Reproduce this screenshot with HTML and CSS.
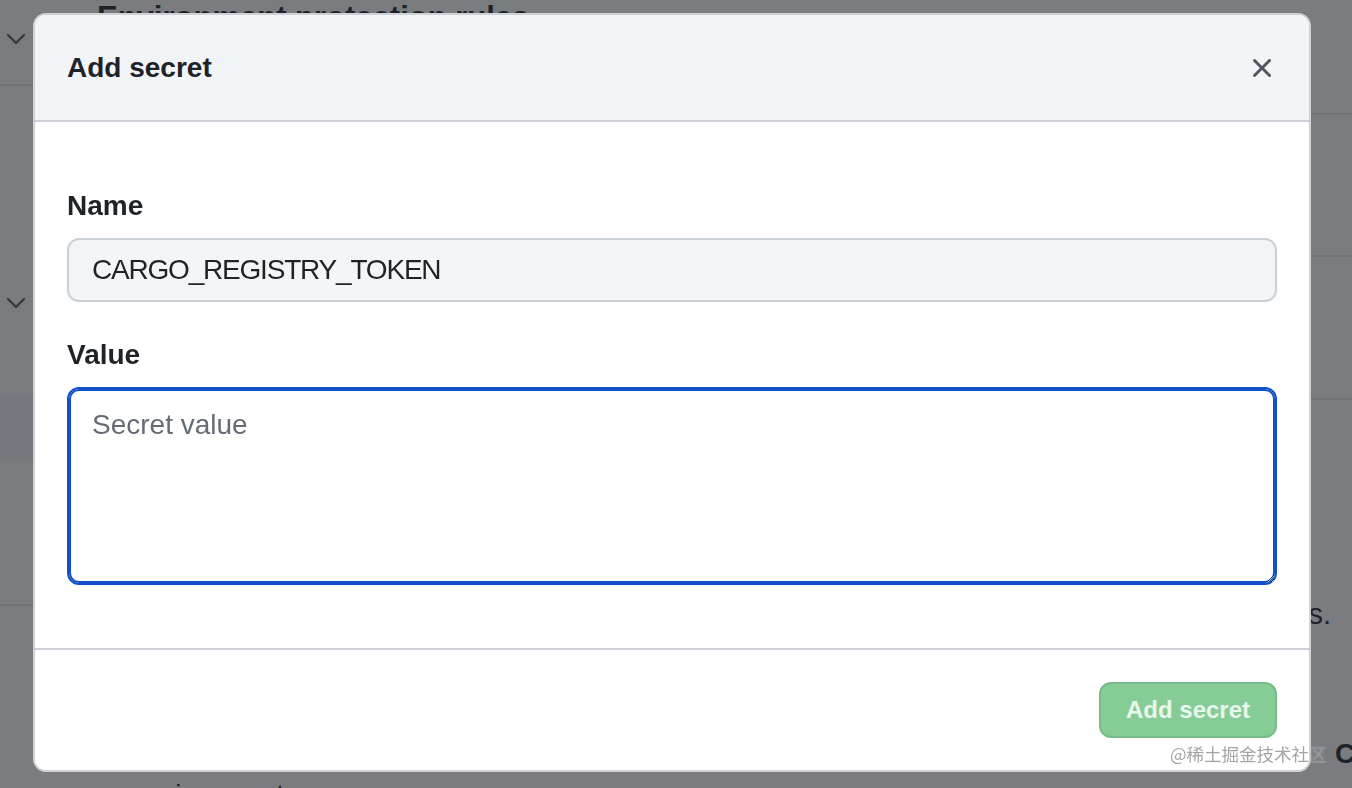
FILE: index.html
```html
<!DOCTYPE html>
<html lang="en">
<head>
<meta charset="utf-8">
<title>Add secret</title>
<link rel="stylesheet" href="styles.css">
</head>
<body>
<div class="page">
  <aside class="rail">
    <div class="rail-row rail-row--first">
      <svg class="chev" viewBox="0 0 20 12"><path d="M2 2 L10 10 L18 2" fill="none" stroke="#57606a" stroke-width="2.4" stroke-linecap="round" stroke-linejoin="round"/></svg>
    </div>
    <div class="rail-row rail-row--second">
      <svg class="chev" viewBox="0 0 20 12"><path d="M2 2 L10 10 L18 2" fill="none" stroke="#57606a" stroke-width="2.4" stroke-linecap="round" stroke-linejoin="round"/></svg>
    </div>
    <div class="rail-band"></div>
    <div class="rail-row rail-row--third"></div>
  </aside>
  <main class="content">
    <div class="section section--head"><h2 class="section-title">Environment protection rules</h2></div>
    <div class="section section--a"></div>
    <div class="section section--b"></div>
    <div class="section section--c"><p class="section-text">Secrets are encrypted environment variables and are only exposed to selected actions.</p></div>
    <div class="section section--d"><span class="section-strong">Co</span></div>
    <div class="section section--e"><p class="section-foot">environment</p></div>
  </main>
</div>

<div class="overlay"></div>

<div class="dialog" role="dialog" aria-labelledby="dialog-title">
  <header class="dialog-header">
    <h1 class="dialog-title" id="dialog-title">Add secret</h1>
    <button class="dialog-close" type="button" aria-label="Close">
      <svg viewBox="0 0 16 16" width="32" height="32"><path fill="#50565e" d="M3.72 3.72a.75.75 0 0 1 1.06 0L8 6.94l3.22-3.22a.749.749 0 0 1 1.275.326.749.749 0 0 1-.215.734L9.06 8l3.22 3.22a.749.749 0 0 1-.326 1.275.749.749 0 0 1-.734-.215L8 9.06l-3.22 3.22a.751.751 0 0 1-1.042-.018.751.751 0 0 1-.018-1.042L6.94 8 3.72 4.78a.75.75 0 0 1 0-1.06Z"/></svg>
    </button>
  </header>
  <div class="dialog-body">
    <label class="field-label" for="secret-name">Name</label>
    <input class="field-input" id="secret-name" type="text" value="CARGO_REGISTRY_TOKEN">
    <label class="field-label field-label--spaced" for="secret-value">Value</label>
    <textarea class="field-textarea" id="secret-value" placeholder="Secret value" autofocus></textarea>
  </div>
  <footer class="dialog-footer">
    <button class="btn-primary" type="submit" disabled>Add secret</button>
  </footer>
</div>

<div class="watermark">@稀土掘金技术社区</div>
</body>
</html>
```

FILE: styles.css
```css
* { box-sizing: border-box; }

html, body {
  margin: 0;
  height: 100%;
  overflow: hidden;
}

body {
  font-family: "Liberation Sans", Arial, sans-serif;
  color: #1f2328;
  background: #ffffff;
}

/* ---------- background page ---------- */
.page {
  display: flex;
  height: 788px;
}

.rail {
  width: 64px;
  flex: none;
  display: flex;
  flex-direction: column;
}

.rail-row--first {
  height: 86px;
  padding: 33px 0 0 6px;
  border-bottom: 2px solid #e6e9ed;
}

.rail-row--second {
  height: 309px;
  padding: 211px 0 0 6px;
}

.rail-band {
  height: 65px;
  background: #f3f5f8;
}

.rail-row--third {
  height: 146px;
  border-bottom: 2px solid #e6e9ed;
}

.chev {
  display: block;
  width: 20px;
  height: 12px;
}

.content {
  flex: 1;
  min-width: 0;
  padding-left: 33px;
}

.section--head {
  height: 116px;
  border-bottom: 2px solid #e6e9ed;
}

.section-title {
  margin: -1px 0 0;
  font-size: 31px;
  line-height: 1.25;
  font-weight: 700;
  color: #24292f;
  white-space: nowrap;
}

.section--a {
  height: 142px;
  border-bottom: 2px solid #e6e9ed;
}

.section--b {
  height: 143px;
  border-bottom: 2px solid #e6e9ed;
}

.section--c {
  height: 300px;
  padding: 192px 21px 0 0;
  text-align: right;
}

.section-text {
  margin: 0;
  font-size: 29px;
  line-height: 44px;
  color: #24292f;
  white-space: nowrap;
}

.section--d {
  height: 68px;
  padding: 40px 0 0 1238px;
  white-space: nowrap;
}

.section-strong {
  display: block;
  font-size: 28px;
  line-height: 28px;
  font-weight: 700;
  color: #24292f;
}

.section--e {
  padding: 7px 0 0 33px;
}

.section-foot {
  margin: 0;
  font-size: 28px;
  line-height: 40px;
  color: #24292f;
}

/* ---------- overlay ---------- */
.overlay {
  position: fixed;
  inset: 0;
  background: rgba(27, 31, 36, 0.585);
}

/* ---------- dialog ---------- */
.dialog {
  position: fixed;
  left: 33px;
  top: 13px;
  width: 1278px;
  height: 759px;
  display: flex;
  flex-direction: column;
  background: #ffffff;
  border: 2px solid #cfd1d6;
  border-radius: 13px;
  overflow: hidden;
}

.dialog-header {
  height: 107px;
  flex: none;
  display: flex;
  align-items: center;
  justify-content: space-between;
  padding: 0 31px 0 32px;
  background: #f2f5f8;
  border-bottom: 2px solid #cdd0d8;
}

.dialog-title {
  margin: 0;
  font-size: 28px;
  line-height: 1;
  font-weight: 700;
  color: #1f2328;
}

.dialog-close {
  display: flex;
  width: 32px;
  height: 32px;
  padding: 0;
  border: 0;
  background: none;
}

.dialog-body {
  flex: 1;
  display: flex;
  flex-direction: column;
  padding: 63px 32px 61px;
}

.field-label {
  font-size: 28px;
  line-height: 42px;
  font-weight: 700;
  color: #1f2328;
  margin-bottom: 11px;
}

.field-label--spaced {
  margin-top: 32px;
}

.field-input {
  height: 64px;
  flex: none;
  padding: 0 23px;
  border: 2px solid #cbd0d6;
  border-radius: 12px;
  background: #f3f6f9;
  font-family: "Liberation Sans", Arial, sans-serif;
  font-size: 28px;
  letter-spacing: -1.2px;
  color: #1f2328;
  outline: none;
}

.field-textarea {
  height: 198px;
  flex: none;
  padding: 16px 23px 10px;
  border: 2px solid #1150c8;
  box-shadow: inset 0 0 0 2px #1150c8;
  border-radius: 12px;
  background: #ffffff;
  font-family: "Liberation Sans", Arial, sans-serif;
  font-size: 28px;
  line-height: 40px;
  color: #1f2328;
  caret-color: #1f2328;
  outline: none;
  resize: both;
}

.field-textarea::placeholder {
  color: #656c75;
  opacity: 1;
}

.dialog-footer {
  height: 122px;
  flex: none;
  display: flex;
  justify-content: flex-end;
  align-items: flex-start;
  padding: 32px;
  border-top: 2px solid #cdd0d8;
}

.btn-primary {
  width: 178px;
  height: 56px;
  padding: 0;
  border: 2px solid #77bc87;
  border-radius: 12px;
  background: #86cc96;
  color: #e9f7ec;
  font-family: "Liberation Sans", Arial, sans-serif;
  font-size: 24px;
  font-weight: 700;
}

/* ---------- watermark ---------- */
.watermark {
  position: fixed;
  left: 1170px;
  top: 742px;
  font-family: "Noto Sans CJK SC", "Liberation Sans", sans-serif;
  font-size: 17.5px;
  line-height: 24px;
  color: rgba(115, 115, 115, 0.65);
  text-shadow: 0 0 1px rgba(255, 255, 255, 0.7);
  white-space: nowrap;
}
```
